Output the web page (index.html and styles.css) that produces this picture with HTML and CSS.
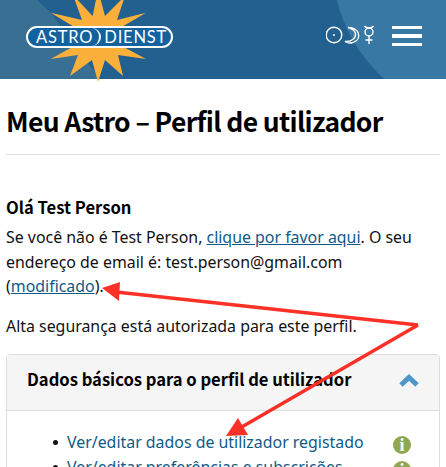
FILE: index.html
```html
<!DOCTYPE html>
<html lang="pt">
    <head>
        <meta charset="UTF-8">
        <meta name="viewport" content="width=device-width, initial-scale=1.0">
        <title>Meu Astro</title>
        <link rel="stylesheet" href="styles.css">
    </head>
    <body>
        <header class="topbar">
            <svg class="topbar-bg" width="446" height="79" viewBox="0 0 446 79">
                <polygon points="0,0 37,0 50,12 100,79 0,79" fill="#3a6f94"/>
                <circle cx="489" cy="-38" r="157" fill="#3878a4"/>
            </svg>
            <div class="logo">
                <svg class="logo-star" width="100" height="84" viewBox="50 0 100 84">
                    <polygon fill="#fbb03b" points="98,-10 105,16 125,-4 117,20 146,12.700 120,28 120,45 146,59 118,55 123,76 105,60 98,82 92,60 70,76 78,55 50.700,59 76,45 76,28 50.700,12.700 82,20 73,-5 92.600,16"/>
                </svg>
                <div class="logo-pill">
                    <span class="logo-astro">ASTRO</span>
                    <span class="logo-dienst">DIENST</span>
                </div>
            </div>
            <div class="topbar-right">
                <svg class="planets" width="50" height="22" viewBox="0 0 50 22" fill="none" stroke="#fff" stroke-width="1.400">
                    <circle cx="8" cy="10" r="7.800"/>
                    <circle cx="8" cy="10" r="1" fill="#fff" stroke="none"/>
                    <path d="M22 2.500 C33 2 37 14 27 17.500 C24 18.500 21.500 18 19 16.500 C25 17 30 13 29.500 9 C29 5.500 26 3.500 22 2.500 Z"/>
                    <circle cx="43" cy="7" r="4"/>
                    <path d="M38.500 1 C39.500 2.500 41 3 43 3 C45 3 46.500 2.500 47.500 1 M43 11 V19 M39.500 15 H46.500"/>
                </svg>
                <div class="burger">
                    <span></span>
                    <span></span>
                    <span></span>
                </div>
            </div>
        </header>

        <main class="content">
            <h1>Meu Astro – Perfil de utilizador</h1>
            <h2>Olá Test Person</h2>
            <p>Se você não é Test Person, <a href="#">clique por favor aqui</a>. O seu endereço de email é: test.person@gmail.com (<a href="#">modificado</a>).</p>
            <p>Alta segurança está autorizada para este perfil.</p>

            <section class="panel">
                <div class="panel-head">
                    <h3>Dados básicos para o perfil de utilizador</h3>
                    <svg class="chevron" width="20" height="14" viewBox="0 0 20 14">
                        <path d="M2 11 L10 3.500 L18 11" fill="none" stroke="#4d97c9" stroke-width="5"/>
                    </svg>
                </div>
                <ul class="panel-list">
                    <li><a href="#">Ver/editar dados de utilizador registado</a><span class="info">i</span></li>
                    <li><a href="#">Ver/editar preferências e subscrições</a><span class="info">i</span></li>
                </ul>
            </section>
        </main>

        <!-- setas vermelhas por cima da pagina -->
        <svg class="arrows" width="446" height="467" viewBox="0 0 446 467">
            <path d="M418 325 L116 292 M418 325 L240 428" fill="none" stroke="#fb3026" stroke-width="3.500"/>
            <polygon points="102,288 120,282 119,301" fill="#fb3026"/>
            <polygon points="226,436 238,418 248,435" fill="#fb3026"/>
        </svg>
    </body>
</html>
```

FILE: styles.css
```css
html, body {
    height: 467px;
    overflow: hidden;
}

body {
    margin: 0;
    padding: 0;
    font-family: "Noto Sans", sans-serif;
    font-size: 15.900px;
    line-height: 24.500px;
    color: #111;
    background-color: #fff;
    position: relative;
}

a {
    color: #0f5a88;
}

.topbar {
    height: 79px;
    background-color: #22608f;
    position: relative;
    display: flex;
    align-items: center;
    justify-content: space-between;
}

.topbar-bg {
    position: absolute;
    top: 0;
    left: 0;
}

.logo {
    position: relative;
    margin: 0 0 6px 26px;
    width: 147px;
}

.logo-star {
    position: absolute;
    left: 24px;
    top: -26px;
}

.logo-pill {
    position: relative;
    height: 18px;
    border: 2px solid #fff;
    border-radius: 13px;
    background-color: #12629f;
    display: flex;
    align-items: center;
    color: #fff;
    font-family: "Lato", sans-serif;
    font-size: 16.500px;
    line-height: 18px;
    letter-spacing: 0.800px;
}

.logo-astro {
    padding: 0 6px 0 8px;
    border-right: 2px solid #fff;
    border-radius: 0 10px 10px 0;
    height: 18px;
}

.logo-dienst {
    padding-left: 3px;
}

.topbar-right {
    position: relative;
    display: flex;
    align-items: center;
    gap: 16px;
    margin: 0 24px 7px 0;
}

.planets {
    display: block;
}

.burger {
    width: 30px;
    display: flex;
    flex-direction: column;
    gap: 5px;
}

.burger span {
    height: 3.500px;
    background-color: #fff;
}

.content {
    padding: 0 6px;
}

h1, h2, h3 {
    font-family: "Noto Sans CJK SC", "Noto Sans", sans-serif;
    font-weight: 700;
    color: #000;
    margin: 0;
}

h1 {
    padding: 25px 0 16px;
    font-size: 26.500px;
    line-height: 34px;
    letter-spacing: -0.650px;
    border-bottom: 1px solid #ddd;
}

h2 {
    padding-top: 40px;
    font-size: 16.600px;
    line-height: 24px;
}

p {
    margin: 0;
    padding-top: 6px;
    padding-bottom: 9px;
}

.panel {
    margin-top: 7px;
    border: 1px solid #ddd;
    border-radius: 4px;
}

.panel-head {
    box-sizing: border-box;
    height: 56px;
    padding: 12px 20px 0;
    background-color: #f5f5f5;
    border-bottom: 1px solid #ddd;
    display: flex;
    align-items: flex-start;
    justify-content: space-between;
}

h3 {
    font-size: 16.600px;
    line-height: 24.500px;
}

.chevron {
    margin-top: 7px;
}

.panel-list {
    margin: 0;
    padding: 19px 28px 0 60px;
    list-style: none;
}

.panel-list li {
    position: relative;
}

.panel-list li::before {
    content: '';
    position: absolute;
    left: -14px;
    top: 10px;
    width: 5px;
    height: 5px;
    border-radius: 50%;
    background-color: #111;
}

.panel-list a {
    text-decoration: none;
}

.info {
    position: absolute;
    right: 0;
    top: 6px;
    width: 18px;
    height: 18px;
    border-radius: 50%;
    background-color: #8fa84f;
    color: #fff;
    font-family: "Liberation Serif", serif;
    font-weight: 700;
    font-size: 18px;
    line-height: 18px;
    text-align: center;
}

.arrows {
    position: absolute;
    top: 0;
    left: 0;
}
```
